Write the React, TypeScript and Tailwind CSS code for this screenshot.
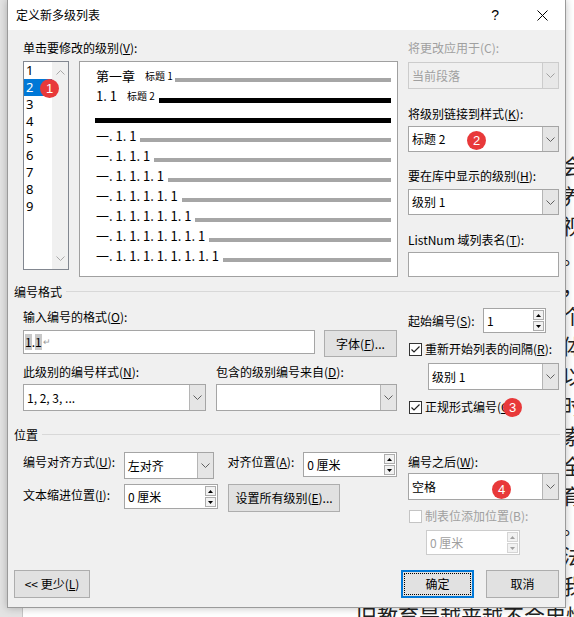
import React from 'react';

const F = "font-['Noto_Sans_CJK_SC',sans-serif]";

function Chevron({ color = '#606060' }: { color?: string }) {
  return (
    <svg width="9" height="5" viewBox="0 0 9 5">
      <path d="M0.5 0.5 L4.5 4.5 L8.5 0.5" fill="none" stroke={color} strokeWidth="1" />
    </svg>
  );
}

function ChevronUp({ color = '#a8a8a8' }: { color?: string }) {
  return (
    <svg width="9" height="5" viewBox="0 0 9 5">
      <path d="M0.5 4.5 L4.5 0.5 L8.5 4.5" fill="none" stroke={color} strokeWidth="1" />
    </svg>
  );
}

function Combo({
  className,
  text,
  disabled,
}: {
  className: string;
  text?: React.ReactNode;
  disabled?: boolean;
}) {
  return (
    <div
      className={`flex border ${
        disabled ? 'border-[#cccccc] bg-[#f0f0f0] text-[#a0a0a0]' : 'border-[#a5a5a5] bg-white text-black'
      } ${className}`}
    >
      <div className="flex-1 flex items-center pl-[3px] text-[12px] leading-[16px] whitespace-nowrap">{text}</div>
      <div
        className={`w-[16px] flex items-center justify-center border-l ${
          disabled ? 'border-[#cccccc] bg-[#e8e8e8]' : 'border-[#b5b5b5] bg-[#e5e5e5]'
        }`}
      >
        <Chevron color={disabled ? '#a0a0a0' : '#606060'} />
      </div>
    </div>
  );
}

function Spin({ className, text, disabled }: { className: string; text: string; disabled?: boolean }) {
  const tri = disabled ? '#a0a0a0' : '#000000';
  return (
    <div
      className={`flex border bg-white ${
        disabled ? 'border-[#cccccc] text-[#a0a0a0]' : 'border-[#a5a5a5] text-black'
      } ${className}`}
    >
      <div className="flex-1 flex items-center pl-[3px] text-[12px] leading-[16px] whitespace-nowrap">{text}</div>
      <div className="flex flex-col w-[11px] my-[1px] mr-[1px] gap-[1px]">
        <div
          className={`flex-1 border ${
            disabled ? 'border-[#d5d5d5]' : 'border-[#adadad]'
          } bg-[#f2f2f2] flex items-center justify-center`}
        >
          <svg width="5" height="3" viewBox="0 0 5 3">
            <path d="M0 3 L2.5 0 L5 3Z" fill={tri} />
          </svg>
        </div>
        <div
          className={`flex-1 border ${
            disabled ? 'border-[#d5d5d5]' : 'border-[#adadad]'
          } bg-[#f2f2f2] flex items-center justify-center`}
        >
          <svg width="5" height="3" viewBox="0 0 5 3">
            <path d="M0 0 L2.5 3 L5 0Z" fill={tri} />
          </svg>
        </div>
      </div>
    </div>
  );
}

function Check({ checked, disabled }: { checked?: boolean; disabled?: boolean }) {
  return (
    <div
      className={`w-[13px] h-[13px] border bg-white shrink-0 flex items-center justify-center ${
        disabled ? 'border-[#c4c4c4]' : 'border-[#333333]'
      }`}
    >
      {checked && (
        <svg width="11" height="11" viewBox="0 0 11 11">
          <path d="M1.5 5.5 L4 8 L9.5 2.5" fill="none" stroke="#222222" strokeWidth="1.2" />
        </svg>
      )}
    </div>
  );
}

function Btn({ className, children }: { className: string; children: React.ReactNode }) {
  return (
    <div
      className={`flex items-center justify-center bg-[#e1e1e1] border border-[#adadad] text-[12px] leading-[16px] whitespace-nowrap ${className}`}
    >
      {children}
    </div>
  );
}

function Badge({ n, className }: { n: string; className: string }) {
  return (
    <div
      className={`absolute w-[19px] h-[19px] rounded-full bg-[#e8393a] text-white text-[13px] leading-[19px] text-center font-['Liberation_Sans',sans-serif] ${className}`}
    >
      {n}
    </div>
  );
}

function Label({ children, className = '' }: { children: React.ReactNode; className?: string }) {
  return <div className={`text-[12px] leading-[16px] whitespace-nowrap ${className}`}>{children}</div>;
}

function SectionHeader({ children }: { children: React.ReactNode }) {
  return (
    <div className="flex items-center h-[16px] pl-[6px] pr-[5px]">
      <span className="text-[12px] leading-[16px] whitespace-nowrap">{children}</span>
      <div className="flex-1 ml-[4px] mb-[1px] border-t border-[#d8d8d8]" />
    </div>
  );
}

const para =
  '教育的目的在于培养人的全面发展，使每个人都能够在社会中找到自己的位置。现代教育强调学生的主体地位，注重培养学生的创新精神和实践能力。旧的教育方式以灌输为主，忽视了学生的个性差异，这种做法已经不能适应时代发展的需要。因此，教育改革势在必行，我们应当积极探索新的教学模式，把课堂还给学生。';

export default function App() {
  const docLines = Array.from({ length: 15 }, (_, i) => {
    const s = (para + para + para).slice(i * 27, i * 27 + 27);
    return s;
  });

  const levels = ['1', '2', '3', '4', '5', '6', '7', '8', '9'];
  const deepRows = [2, 3, 4, 5, 6, 7, 8].map((k) => '一. ' + Array(k).fill('1').join('. '));

  return (
    <div className={`relative w-[574px] h-[617px] overflow-hidden bg-white text-black ${F}`}>
      {/* document behind the dialog */}
      <div className="flex w-full h-full">
        <div className="w-[23px] h-full bg-[#e3e3e3] border-r border-[#c6c6c6]" />
        <div className="flex-1 flex flex-col pt-[150px] overflow-hidden text-[21px] leading-[30px] text-[#222]">
          {docLines.map((l, i) => (
            <div key={i} className="whitespace-nowrap pl-[14px]">
              {l}
            </div>
          ))}
          <div className="whitespace-nowrap pl-[333px]">旧教育是越来越不合忠愧。</div>
        </div>
      </div>

      {/* dialog */}
      <div className="absolute left-[7px] top-0 w-[559px] h-[608px] flex flex-col border-x border-b border-[#9a9a9a] shadow-[0_0_8px_rgba(0,0,0,0.25)]">
        {/* title bar */}
        <div className="h-[30px] bg-white flex items-center pl-[8px] pr-[17px]">
          <span className="text-[12px] leading-[16px]">定义新多级列表</span>
          <span className="ml-auto text-[14px] leading-[16px] font-['Liberation_Sans',sans-serif]">?</span>
          <svg className="ml-[38px]" width="11" height="11" viewBox="0 0 11 11">
            <path d="M0.5 0.5 L10.5 10.5 M10.5 0.5 L0.5 10.5" stroke="#000" strokeWidth="1" />
          </svg>
        </div>

        {/* body */}
        <div className="flex-1 bg-[#f0f0f0] flex flex-col pt-[10px] pb-[9px]">
          {/* top section */}
          <div className="h-[244px] flex pl-[15px]">
            <div className="w-[375px] flex flex-col">
              <Label>
                单击要修改的级别(<u>V</u>):
              </Label>
              <div className="mt-[5px] flex gap-[10px]">
                {/* level list */}
                <div className="w-[46px] h-[209px] border border-[#828790] bg-white flex">
                  <div className="w-[28px] flex flex-col text-[13px] leading-[17px] font-['Noto_Sans',sans-serif]">
                    {levels.map((l) => (
                      <div
                        key={l}
                        className={`h-[17px] pl-[2px] ${l === '2' ? 'bg-[#0078d7] text-white' : ''}`}
                      >
                        {l}
                      </div>
                    ))}
                  </div>
                  <div className="flex-1 bg-[#f0f0f0] flex flex-col items-center justify-between pt-[8px] pb-[8px]">
                    <ChevronUp />
                    <Chevron color="#a8a8a8" />
                  </div>
                </div>
                {/* preview */}
                <div className="w-[319px] h-[216px] border border-[#a0a0a0] bg-white pt-[4px] pl-[16px] pr-[6px] flex flex-col">
                  <div className="h-[20px] flex items-center">
                    <span className="text-[13px] leading-[16px] whitespace-nowrap">第一章</span>
                    <span className="ml-[10px] text-[10px] leading-[12px] whitespace-nowrap">标题 1</span>
                    <div className="flex-1 ml-[2px] mt-[8px] h-[4px] bg-[#a6a6a6]" />
                  </div>
                  <div className="h-[20px] flex items-center">
                    <span className="text-[13px] leading-[16px] whitespace-nowrap">1. 1</span>
                    <span className="ml-[10px] text-[10px] leading-[12px] whitespace-nowrap">标题 2</span>
                    <div className="flex-1 ml-[4px] mt-[9px] h-[5px] bg-black" />
                  </div>
                  <div className="h-[20px] flex items-center">
                    <div className="flex-1 -ml-[1px] mt-[9px] h-[5px] bg-black" />
                  </div>
                  {deepRows.map((t) => (
                    <div key={t} className="h-[20px] flex items-center">
                      <span className="text-[13px] leading-[16px] whitespace-nowrap">{t}</span>
                      <div className="flex-1 ml-[4px] mt-[7px] h-[4px] bg-[#a6a6a6]" />
                    </div>
                  ))}
                </div>
              </div>
            </div>
            <div className="ml-[10px] w-[151px] flex flex-col">
              <Label className="text-[#a0a0a0]">将更改应用于(C):</Label>
              <Combo className="mt-[6px] h-[27px]" text="当前段落" disabled />
              <Label className="mt-[17px]">
                将级别链接到样式(<u>K</u>):
              </Label>
              <Combo className="mt-[4px] h-[26px]" text="标题 2" />
              <Label className="mt-[16px]">
                要在库中显示的级别(<u>H</u>):
              </Label>
              <Combo className="mt-[5px] h-[26px]" text="级别 1" />
              <Label className="mt-[17px]">
                ListNum 域列表名(<u>T</u>):
              </Label>
              <div className="mt-[4px] h-[25px] border border-[#a5a5a5] bg-white" />
            </div>
          </div>

          <SectionHeader>编号格式</SectionHeader>

          {/* numbering format */}
          <div className="h-[127px] flex pl-[15px]">
            <div className="w-[374px] flex flex-col pt-[9px]">
              <Label>
                输入编号的格式(<u>O</u>):
              </Label>
              <div className="mt-[5px] flex items-start">
                <div className="w-[292px] h-[24px] border border-[#a5a5a5] bg-white flex items-center pl-[1px] text-[12px] leading-[16px]">
                  <span className="bg-[#c8c8c8]">1</span>
                  <span>.</span>
                  <span className="bg-[#c8c8c8]">1</span>
                  <span className="text-[9px] text-[#9a9a9a] ml-[1px]">↵</span>
                </div>
                <Btn className="ml-[9px] w-[73px] h-[27px]">
                  字体(<u>F</u>)...
                </Btn>
              </div>
              <div className="mt-[7px] flex">
                <Label className="w-[193px]">
                  此级别的编号样式(<u>N</u>):
                </Label>
                <Label>
                  包含的级别编号来自(<u>D</u>):
                </Label>
              </div>
              <div className="mt-[4px] flex gap-[10px]">
                <Combo className="w-[183px] h-[27px]" text="1, 2, 3, ..." />
                <Combo className="w-[181px] h-[27px]" text="" />
              </div>
            </div>
            <div className="ml-[11px] w-[151px] flex flex-col pt-[8px]">
              <div className="h-[25px] flex items-center">
                <Label className="w-[75px]">
                  起始编号(<u>S</u>):
                </Label>
                <Spin className="w-[63px] h-[25px]" text="1" />
              </div>
              <div className="mt-[8px] h-[16px] flex items-center">
                <div className="ml-[1px]">
                  <Check checked />
                </div>
                <Label className="ml-[3px]">
                  重新开始列表的间隔(<u>R</u>):
                </Label>
              </div>
              <Combo className="ml-[20px] w-[131px] mt-[6px] h-[27px]" text="级别 1" />
              <div className="mt-[9px] h-[16px] flex items-center">
                <div className="ml-[1px]">
                  <Check checked />
                </div>
                <Label className="ml-[3px]">
                  正规形式编号(<u>G</u>)
                </Label>
              </div>
            </div>
          </div>

          <SectionHeader>位置</SectionHeader>

          {/* position */}
          <div className="h-[127px] flex pl-[15px]">
            <div className="w-[374px] flex flex-col pt-[9px]">
              <div className="h-[27px] flex items-start">
                <Label className="w-[101px] mt-[2px]">
                  编号对齐方式(<u>U</u>):
                </Label>
                <Combo className="w-[91px] h-[27px]" text="左对齐" />
                <Label className="ml-[13px] w-[76px] mt-[2px]">
                  对齐位置(<u>A</u>):
                </Label>
                <Spin className="w-[94px] h-[25px]" text="0 厘米" />
              </div>
              <div className="mt-[5px] flex items-start">
                <Label className="w-[101px] mt-[3px]">
                  文本缩进位置(<u>I</u>):
                </Label>
                <Spin className="w-[94px] h-[25px]" text="0 厘米" />
                <Btn className="ml-[10px] w-[112px] h-[28px]">
                  设置所有级别(<u>E</u>)...
                </Btn>
              </div>
            </div>
            <div className="ml-[11px] w-[151px] flex flex-col pt-[11px]">
              <Label>
                编号之后(<u>W</u>):
              </Label>
              <Combo className="mt-[3px] h-[27px]" text="空格" />
              <div className="mt-[8px] h-[16px] flex items-center">
                <div className="ml-[1px]">
                  <Check disabled />
                </div>
                <Label className="ml-[3px] text-[#a0a0a0]">制表位添加位置(B):</Label>
              </div>
              <Spin className="ml-[18px] mt-[6px] w-[94px] h-[25px]" text="0 厘米" disabled />
            </div>
          </div>

          {/* buttons */}
          <div className="h-[28px] flex items-center pl-[6px] pr-[6px]">
            <Btn className="w-[76px] h-[28px]">
              &lt;&lt; 更少(<u>L</u>)
            </Btn>
            <div className="ml-auto w-[73px] h-[28px] border-2 border-[#0078d7] bg-[#e1e1e1] p-[1px]">
              <div className="w-full h-full border border-dotted border-black flex items-center justify-center text-[12px] leading-[16px]">
                确定
              </div>
            </div>
            <Btn className="ml-[12px] w-[73px] h-[28px]">取消</Btn>
          </div>
        </div>

        <Badge n="1" className="left-[32px] top-[79px]" />
        <Badge n="2" className="left-[459px] top-[131px]" />
        <Badge n="3" className="left-[495px] top-[398px]" />
        <Badge n="4" className="left-[484px] top-[480px]" />
      </div>
    </div>
  );
}
